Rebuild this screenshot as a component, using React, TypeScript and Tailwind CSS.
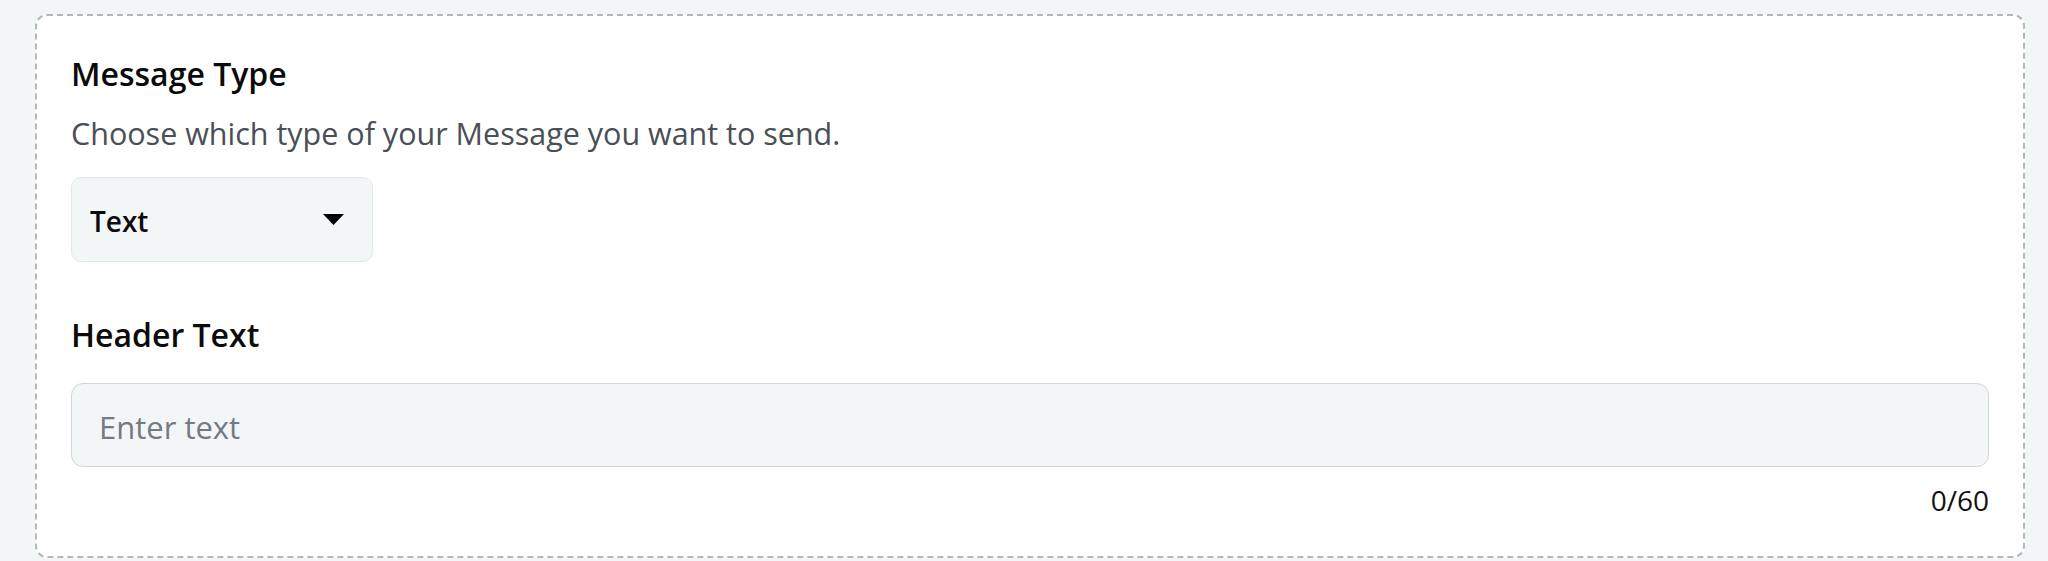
import React from "react";

export default function App() {
  return (
    <div
      className="w-[2048px] h-[561px] bg-[#f3f6f7] pt-[14px] pl-[35px] overflow-hidden"
      style={{ fontFamily: '"Open Sans", "Noto Sans", sans-serif' }}
    >
      <div className="w-[1990px] h-[544px] bg-white border-2 border-dashed border-[#b4b7bb] rounded-[12px] px-[34px] pt-[35.6px] flex flex-col">
        <h2 className="text-[32px] leading-[44px] font-semibold text-[#0b0b0b]">Message Type</h2>
        <p className="mt-[15.6px] text-[30.5px] leading-[44px] text-[#4a4f56]">
          Choose which type of your Message you want to send.
        </p>
        <div className="mt-[21.8px] w-[302px] h-[85px] bg-[#f3f6f7] border-[1.5px] border-[#e4e7e9] rounded-[10px] flex items-center justify-between pl-[18px] pr-[28px] pt-[3px]">
          <span className="text-[28px] leading-[40px] font-semibold text-[#0b0b0b]">Text</span>
          <svg width="21" height="11" viewBox="0 0 21 11" className="mt-[-3px]">
            <polygon points="0,0 21,0 10.5,11" fill="#000" />
          </svg>
        </div>
        <h2 className="mt-[50.6px] text-[32px] leading-[44px] font-semibold text-[#0b0b0b]">Header Text</h2>
        <div className="mt-[26.4px] w-full h-[84px] bg-[#f3f6f7] border-[1.5px] border-[#d2d6da] rounded-[12px] flex items-center pl-[27px] pt-[4px]">
          <input
            className="w-full bg-transparent outline-none text-[31px] leading-[44px] text-[#111] placeholder:text-[#737a83]"
            placeholder="Enter text"
            style={{ fontFamily: '"Open Sans", "Noto Sans", sans-serif' }}
          />
        </div>
        <div className="mt-[13px] text-right text-[28px] leading-[40px] text-[#111]">0/60</div>
      </div>
    </div>
  );
}
